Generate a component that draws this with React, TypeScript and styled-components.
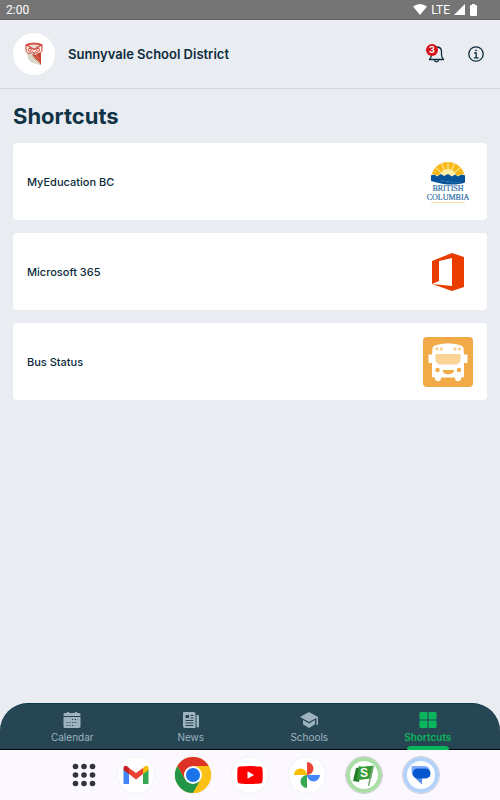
import React from "react";
import styled, { createGlobalStyle } from "styled-components";

const GlobalStyle = createGlobalStyle`
  * { box-sizing: border-box; }
  body {
    margin: 0;
    background: #e9edf2;
    color: #0d2c3c;
    font-family: Inter, "Liberation Sans", sans-serif;
  }
  button { font: inherit; color: inherit; border: 0; padding: 0; background: none; cursor: pointer; }
  a { color: inherit; text-decoration: none; }
  svg { display: block; flex: none; }
`;

const Screen = styled.div`
  min-height: 100vh;
  display: flex;
  flex-direction: column;
`;

const StatusBar = styled.div`
  height: 20px;
  display: flex;
  align-items: center;
  justify-content: space-between;
  padding: 0 22px 0 6px;
  background: #757575;
  border-bottom: 1px solid #625f65;
  color: #fff;
  font: 12px/18px Roboto, sans-serif;
`;

const StatusIcons = styled.div`
  display: flex;
  align-items: center;
  gap: 4px;
`;

const Header = styled.header`
  height: 69px;
  display: flex;
  align-items: center;
  gap: 13px;
  padding: 0 15px 0 13px;
  border-bottom: 1px solid #cbd6df;
`;

const Avatar = styled.div`
  width: 42px;
  height: 42px;
  display: grid;
  place-items: center;
  border-radius: 50%;
  background: #fff;
`;

const District = styled.div`
  flex: 1;
  font-size: 13px;
  line-height: 18px;
  font-weight: 600;
`;

const HeaderActions = styled.div`
  display: flex;
  align-items: center;
  gap: 22px;
`;

const IconButton = styled.button`
  position: relative;
  display: grid;
  place-items: center;
  width: 18px;
  height: 18px;
`;

const Badge = styled.span`
  position: absolute;
  top: -1px;
  left: -1px;
  width: 12px;
  height: 12px;
  border-radius: 50%;
  background: #d81118;
  color: #fff;
  font-size: 9px;
  line-height: 12px;
  font-weight: 700;
  text-align: center;
`;

const Main = styled.main`
  flex: 1;
  padding: 12px 13px;
`;

const Title = styled.h1`
  margin: 0 0 12px;
  font-size: 22px;
  line-height: 30px;
  font-weight: 700;
  color: #113346;
`;

const CardList = styled.div`
  display: flex;
  flex-direction: column;
  gap: 13px;
`;

const Card = styled.a`
  height: 77px;
  display: flex;
  align-items: center;
  justify-content: space-between;
  padding: 0 14px;
  border-radius: 4px;
  background: #fff;
  font-size: 11px;
  line-height: 16px;
  font-weight: 500;
`;

const TabBar = styled.nav`
  height: 47px;
  display: grid;
  grid-template-columns: repeat(4, 1fr);
  padding: 0 13px;
  border-top: 1px solid #0d3647;
  border-bottom: 1px solid #02060a;
  border-radius: 28px 28px 0 0;
  background: #264653;
`;

const Tab = styled.a<{ $active?: boolean }>`
  position: relative;
  display: flex;
  flex-direction: column;
  align-items: center;
  gap: 1px;
  padding-top: 7px;
  color: ${(p) => (p.$active ? "#0bb55b" : "#9fb2c0")};
  font-size: 10px;
  line-height: 14px;
  font-weight: ${(p) => (p.$active ? 600 : 400)};
  &::after {
    content: "";
    display: ${(p) => (p.$active ? "block" : "none")};
    position: absolute;
    bottom: -1px;
    width: 42px;
    height: 4px;
    border-radius: 4px 4px 0 0;
    background: #0bb55b;
  }
`;

const Dock = styled.div`
  height: 50px;
  display: flex;
  align-items: center;
  justify-content: center;
  gap: 19px;
  padding-left: 10px;
  background: #fbf8ff;
`;

const DrawerButton = styled.button`
  width: 28px;
  height: 38px;
  display: grid;
  place-items: center;
`;

const DockButton = styled.button<{ $ring?: string }>`
  width: 38px;
  height: 38px;
  display: grid;
  place-items: center;
  border-radius: 50%;
  border: 1px solid ${(p) => (p.$ring ? "#d2ced8" : "#f3f0f7")};
  background: #fff;
  box-shadow: inset 0 0 0 4px ${(p) => p.$ring || "#fff"};
`;

const Owl = () => (
  <svg width="18" height="24" viewBox="0 0 18 24">
    <path d="M2 10 3 15C4 20 9 22 16 23V10Z" fill="#d3cfbd" />
    <path d="M7 12C10 14 13 12 16 10v13c-2-4-7-6-9-11Z" fill="#c9402f" />
    <path d="m9 14 6 6m-4-7 4 4" stroke="#e59a88" strokeWidth=".6" fill="none" />
    <path d="M5 13c0 4 4 7 8 8" stroke="#f1eee2" strokeWidth="1" fill="none" />
    <path d="M1 3C5 .5 13 .5 17 3v5c0 4-5 4-6.500 1.500L9 12 7.500 9.500C6 12 1 12 1 8Z" fill="#fdf4ee" stroke="#d0392a" strokeWidth="1" />
    <path d="M1.500 3Q9 1 16.500 3L9 7.500Z" fill="#e8ddd0" stroke="#d0392a" strokeWidth="1.200" />
    <circle cx="4.800" cy="7.800" r="1.500" fill="#fff" stroke="#d0392a" />
    <circle cx="13.200" cy="7.800" r="1.500" fill="#fff" stroke="#d0392a" />
  </svg>
);

const BellIcon = () => (
  <svg width="18" height="18" viewBox="0 0 18 18" fill="none" stroke="#0d2c3c" strokeWidth="1.3" strokeLinejoin="round">
    <path d="M2.500 14.500c1-1.200 2-2.400 2-4.500V6.800C4.500 3.800 6.600 2 9.500 2s5 1.800 5 4.800V10c0 2.100 1 3.300 2 4.500Z" />
    <path d="M7.500 15c.2 2.500 3.800 2.500 4 0" />
  </svg>
);

const InfoIcon = () => (
  <svg width="18" height="18" viewBox="0 0 18 18" fill="none" stroke="#0d2c3c" strokeWidth="1.3">
    <circle cx="9" cy="9" r="7.2" />
    <path d="M7.200 8h2v4.700M6.800 12.800h4.800" />
    <circle cx="9" cy="5.3" r=".9" fill="#0d2c3c" stroke="none" />
  </svg>
);

const BritishColumbia = () => (
  <svg width="50" height="50" viewBox="0 0 50 50">
    <path d="M8 22a17 17 0 0 1 34 0Z" fill="#f9b91b" />
    <path d="m25 22-17-5m17 5L11 9m14 13L18 5m7 17V4m0 18 7-17m-7 17L39 9M25 22l17-5" stroke="#fff2bc" strokeWidth="1" />
    <path d="M16 21a9 9 0 0 1 18 0Z" fill="#fff0a9" />
    <path d="M8 18.500c3-1 4-1 6 1l4-2.500 3 2 4-2 4 2.500 3-2 3 2c3-2 4-2 7-1V25c-10 3-19-3-34-1Z" fill="#07549b" />
    <path d="M8 22.500c12-1 18 5 34 2V25.500c-8 3-20 3-34-1.500Z" fill="#07549b" />
    <g fill="#2f6fa8" stroke="#2f6fa8" strokeWidth=".2" fontFamily="'Liberation Serif', serif" fontSize="8" textAnchor="middle">
      <text x="25" y="34">BRITISH</text>
      <text x="25" y="43">COLUMBIA</text>
    </g>
    <path d="M8 45.500h34" stroke="#f5dfa2" />
  </svg>
);

const Office = () => (
  <svg width="50" height="50" viewBox="0 0 50 50">
    <path fill="#eb3c00" fillRule="evenodd" d="m9 14 20-8 12 4v30l-12 4L9 37l20 2V11l-13 3v20l-7 3Z" />
  </svg>
);

const Bus = () => (
  <svg width="50" height="50" viewBox="0 0 50 50">
    <rect width="50" height="50" rx="4" fill="#f2aa48" />
    <path d="M9.500 11c1-6 30-6 31 0l.5 6.500h3.500v8.500H41v13c0 1-1 1.500-2 1.500h-1v1c0 3.500-6 3.500-6 0v-1H18v1c0 3.500-6 3.500-6 0v-1h-1c-1 0-2-.5-2-1.500V26H5.500v-8.500H9Z" fill="#fff" />
    <path d="M13 17.500h24v7l-3 2.500H16l-3-2.500Z" fill="#fad397" stroke="#fad397" strokeLinejoin="round" />
    <g fill="#fad397"><circle cx="14" cy="12" r="1.700" /><circle cx="18.500" cy="12" r="1.700" /><circle cx="32" cy="12" r="1.700" /><circle cx="36.500" cy="12" r="1.700" /></g>
    <g fill="#f2aa48"><circle cx="14.500" cy="33" r="2.200" /><circle cx="36" cy="33" r="2.200" /><path d="M20 33.500h10.500c0 4.500-10.500 4.500-10.500 0Z" stroke="#f2aa48" strokeLinejoin="round" /></g>
  </svg>
);

const CalendarIcon = () => (
  <svg width="18" height="18" viewBox="0 0 18 18">
    <path d="M2 2h2V1h2v1h6V1h2v1h2a1.500 1.500 0 0 1 1.500 1.500V5H.5V3.500A1.500 1.500 0 0 1 2 2Z" fill="currentColor" />
    <path d="M.5 6h17v9.500a1.500 1.500 0 0 1-1.500 1.500H2a1.500 1.500 0 0 1-1.500-1.500Z" fill="currentColor" />
    <g fill="none" stroke="#264653" strokeWidth="1.200" strokeDasharray="1.200 1.600"><path d="M9 8.500h6" /><path d="M3.500 11.500h11" /><path d="M3.500 14.500h7" /></g>
  </svg>
);

const NewsIcon = () => (
  <svg width="18" height="18" viewBox="0 0 18 18">
    <path d="M2 1h10a1.500 1.500 0 0 1 1.500 1.500V17H3a2 2 0 0 1-2-2V2a1 1 0 0 1 1-1ZM14.500 4H16a1 1 0 0 1 1 1v10.500a1.300 1.300 0 0 1-2.500 0Z" fill="currentColor" />
    <path d="M3.500 4H7v3H3.500Z" fill="#264653" />
    <path d="M8.500 4.500h3m-3 2.500h3m-8 2.500h8m-8 2.500h8m-8 2.500h8" stroke="#264653" />
  </svg>
);

const SchoolsIcon = () => (
  <svg width="20" height="18" viewBox="0 0 20 18">
    <path d="m10 1 9 5v8h-1.500V7L10 11 1 6Z" fill="currentColor" />
    <path d="M4 9v4.200L10 17l6-3.800V9l-6 3.500Z" fill="currentColor" />
  </svg>
);

const ShortcutsIcon = () => (
  <svg width="18" height="18" viewBox="0 0 18 18" fill="currentColor">
    <rect x=".5" y="1" width="8" height="7.500" rx=".8" />
    <rect x="9.500" y="1" width="8" height="7.500" rx=".8" />
    <rect x=".5" y="9.500" width="8" height="7.500" rx=".8" />
    <rect x="9.500" y="9.500" width="8" height="7.500" rx=".8" />
  </svg>
);

const DrawerIcon = () => (
  <svg width="24" height="24" viewBox="0 0 24 24" fill="#33323d">
    {[3.5, 12, 20.5].flatMap((y) => [3.5, 12, 20.5].map((x) => <circle key={`${x}-${y}`} cx={x} cy={y} r="2.800" />))}
  </svg>
);

const Gmail = () => (
  <svg width="26" height="20" viewBox="0 0 26 20">
    <path d="M.5 4v14c0 .7.400 1 1 1H6V8Z" fill="#4285f4" />
    <path d="M20 8v11h4.500c.6 0 1-.3 1-1V4Z" fill="#34a853" />
    <path d="M20 3v6l5.500-4V3c0-2.500-2.500-3-4-1.500Z" fill="#fbbc04" />
    <path d="M6 3v6l7 5.500L20 9V3l-7 5Z" fill="#ea4335" />
    <path d="M.5 3v2L6 9V3L4.500 1.500C3 0 .5.500.5 3Z" fill="#c5221f" />
  </svg>
);

const Chrome = () => (
  <svg width="36" height="36" viewBox="0.7 0.7 36.6 36.6">
    <circle cx="19" cy="19" r="18.300" fill="#fbc116" />
    <path d="M3.150 9.850A18.300 18.300 0 0 1 34.850 9.850H19L11 23.600Z" fill="#dd3327" />
    <path d="M3.150 9.850A18.300 18.300 0 0 0 19 37.300L27 23.600H11Z" fill="#219646" />
    <path d="M27 23.600 19 37.300a18.300 18.300 0 0 0 15.850-27.450H19Z" fill="#fbc116" />
    <circle cx="19" cy="19" r="9.150" fill="#fff" />
    <circle cx="19" cy="19" r="7.200" fill="#1a73e8" />
  </svg>
);

const YouTube = () => (
  <svg width="26" height="18" viewBox="0 0 26 18">
    <path d="M3 .6Q13-.4 23 .6q2.500.2 2.500 3 .5 5.400 0 10.800 0 2.800-2.500 3-10 1-20 0-2.500-.2-2.500-3-.5-5.400 0-10.800Q.5.800 3 .6Z" fill="#f00" />
    <path d="m10.500 5.200 6.500 3.800-6.500 3.800Z" fill="#fff" />
  </svg>
);

const Photos = () => (
  <svg width="28" height="28" viewBox="0 0 28 28">
    <path d="M14 14V1a6.500 6.500 0 0 1 0 13Z" fill="#ea4335" />
    <path d="M14 14h13a6.500 6.500 0 0 1-13 0Z" fill="#4285f4" />
    <path d="M14 14v13a6.500 6.500 0 0 1 0-13Z" fill="#34a853" />
    <path d="M14 14H1a6.500 6.500 0 0 1 13 0Z" fill="#fbbc04" />
  </svg>
);

const Flag = () => (
  <svg width="24" height="24" viewBox="0 0 24 24">
    <path d="m4 5 6-1-3 15-6-1Z" fill="#237f29" />
    <path d="M7 3c5 2 9-1 15 0l-3 13c-5-1-9 2-14 0Z" fill="#369b34" />
    <path d="m21 3-4.500 20" stroke="#7ba878" strokeWidth="1.500" />
    <text x="8" y="14" fill="#fff" fontFamily="Liberation Sans, sans-serif" fontSize="12" fontWeight="700">S</text>
  </svg>
);

const Messages = () => (
  <svg width="22" height="22" viewBox="0 0 22 22">
    <path d="M1.500 2H14a6 6 0 0 1 6 5v6H8a6 6 0 0 1-6.500-6Z" fill="#7caaff" />
    <path d="M5 13h7v7.500L6 15Z" fill="#5a8ff0" />
    <rect x="2.500" y="4.500" width="18" height="10" rx="5" fill="#0756cd" />
  </svg>
);

const shortcuts = [
  { label: "MyEducation BC", Icon: BritishColumbia },
  { label: "Microsoft 365", Icon: Office },
  { label: "Bus Status", Icon: Bus },
];

const tabs = [
  { label: "Calendar", Icon: CalendarIcon },
  { label: "News", Icon: NewsIcon },
  { label: "Schools", Icon: SchoolsIcon },
  { label: "Shortcuts", Icon: ShortcutsIcon, active: true },
];

const apps = [
  { label: "Gmail", Icon: Gmail },
  { label: "Chrome", Icon: Chrome },
  { label: "YouTube", Icon: YouTube },
  { label: "Photos", Icon: Photos },
  { label: "School app", Icon: Flag, ring: "#a9dfa5" },
  { label: "Messages", Icon: Messages, ring: "#b2d2fc" },
];

export default function App() {
  return (
    <Screen>
      <GlobalStyle />
      <StatusBar>
        <span>2:00</span>
        <StatusIcons>
          <svg width="14" height="11" viewBox="0 0 14 11" fill="#fff"><path d="M0 2.500Q7-2.500 14 2.500L7 11Z" /></svg>
          <span>LTE</span>
          <svg width="11" height="11" viewBox="0 0 11 11" fill="#fff"><path d="M11 0v11H0Z" /></svg>
          <svg width="9" height="12" viewBox="0 0 9 12" fill="#fff"><path d="M3 0h3v1h1a1 1 0 0 1 1 1v9a1 1 0 0 1-1 1H2a1 1 0 0 1-1-1V2a1 1 0 0 1 1-1h1Z" /></svg>
        </StatusIcons>
      </StatusBar>
      <Header>
        <Avatar><Owl /></Avatar>
        <District>Sunnyvale School District</District>
        <HeaderActions>
          <IconButton aria-label="Notifications"><BellIcon /><Badge>3</Badge></IconButton>
          <IconButton aria-label="Information"><InfoIcon /></IconButton>
        </HeaderActions>
      </Header>
      <Main>
        <Title>Shortcuts</Title>
        <CardList>
          {shortcuts.map(({ label, Icon }) => (
            <Card href="#" key={label}><span>{label}</span><Icon /></Card>
          ))}
        </CardList>
      </Main>
      <TabBar>
        {tabs.map(({ label, Icon, active }) => (
          <Tab href="#" key={label} $active={active} aria-current={active ? "page" : undefined}>
            <Icon />
            <span>{label}</span>
          </Tab>
        ))}
      </TabBar>
      <Dock>
        <DrawerButton aria-label="All apps"><DrawerIcon /></DrawerButton>
        {apps.map(({ label, Icon, ring }) => (
          <DockButton key={label} aria-label={label} $ring={ring}><Icon /></DockButton>
        ))}
      </Dock>
    </Screen>
  );
}
